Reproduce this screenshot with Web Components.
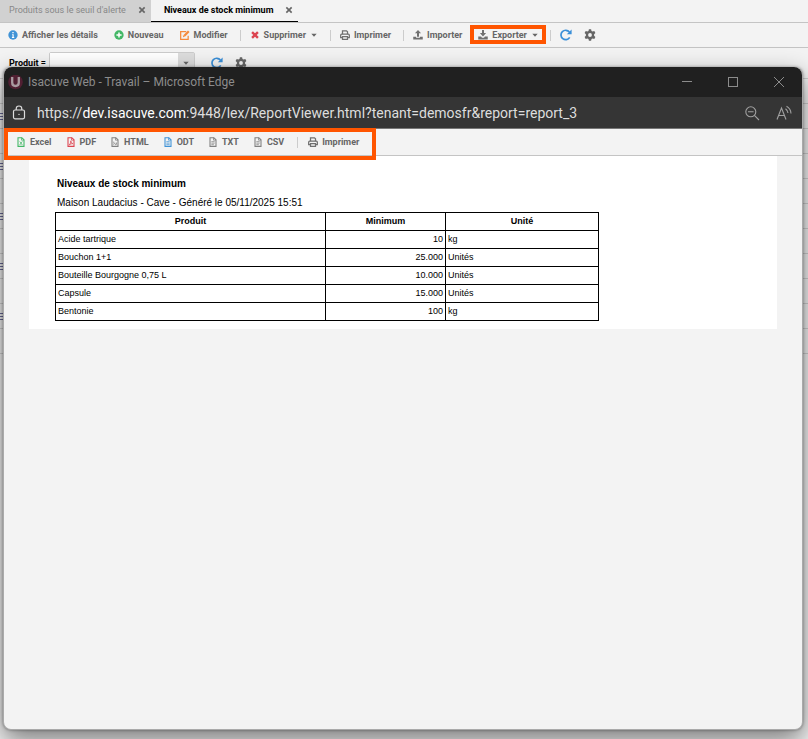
<!DOCTYPE html>
<html lang="fr">
<head>
<meta charset="utf-8">
<meta name="viewport" content="width=device-width, initial-scale=1">
<title>Niveaux de stock minimum</title>
<style>
    html, body {
        height: 100%;
    }

    body {
        margin: 0;
        overflow: hidden;
        background: #f3f3f3;
        color: #666;
        font: 500 9px/12px Roboto, sans-serif;
    }

    app-page {
        height: 100%;
    }
</style>
</head>
<body>

<app-page>
    <tab-strip slot="header">
        <tab-item label="Produits sous le seuil d'alerte"></tab-item>
        <tab-item label="Niveaux de stock minimum" active></tab-item>
    </tab-strip>
    <tool-bar slot="header">
        <tool-button icon="info">Afficher les détails</tool-button>
        <tool-button icon="plus">Nouveau</tool-button>
        <tool-button icon="edit">Modifier</tool-button>
        <tool-separator></tool-separator>
        <tool-button icon="cross" menu>Supprimer</tool-button>
        <tool-separator></tool-separator>
        <tool-button icon="print">Imprimer</tool-button>
        <tool-separator></tool-separator>
        <tool-button icon="upload">Importer</tool-button>
        <high-light>
            <tool-button icon="download" menu>Exporter</tool-button>
        </high-light>
        <tool-separator></tool-separator>
        <tool-button icon="refresh" title="Actualiser"></tool-button>
        <tool-button icon="gear" title="Options"></tool-button>
    </tool-bar>
    <filter-bar slot="header" label="Produit ="></filter-bar>
    <back-grid></back-grid>

    <popup-window slot="popup" caption="Isacuve Web - Travail – Microsoft Edge">
        <address-bar slot="address" scheme="https://" host="dev.isacuve.com" path=":9448/lex/ReportViewer.html?tenant=demosfr&amp;report=report_3"></address-bar>
        <tool-bar compact>
            <high-light large>
                <tool-button icon="excel">Excel</tool-button>
                <tool-button icon="pdf">PDF</tool-button>
                <tool-button icon="html">HTML</tool-button>
                <tool-button icon="odt">ODT</tool-button>
                <tool-button icon="txt">TXT</tool-button>
                <tool-button icon="txt">CSV</tool-button>
                <tool-separator></tool-separator>
                <tool-button icon="print">Imprimer</tool-button>
            </high-light>
        </tool-bar>
        <stock-report caption="Niveaux de stock minimum" info="Maison Laudacius - Cave - Généré le 05/11/2025 15:51"></stock-report>
    </popup-window>
</app-page>

<script>
const sheet = (color, inner) => `
    <g fill="none" stroke="${color}" stroke-width="1.3">
        <path d="M2.4 .8H7L9.6 3.4V11.2H2.4Z"/><path d="M6.6 .8V3.8H9.6" stroke-width=".9"/>
        <g stroke-width=".9">${inner}</g>
    </g>`;

const ICONS = {
    info: `<circle cx="6" cy="6" r="5.6" fill="#4093d6"/><path d="M5 5H6.8V8.5H7.5V9.5H4.7V8.5H5.4V6H4.8ZM5.2 2.3H6.8V3.9H5.2Z" fill="#fff"/>`,
    plus: `<circle cx="6" cy="6" r="5.6" fill="#43b766"/><path d="M6 2.9V9.1M2.9 6H9.1" stroke="#fff" stroke-width="1.8"/>`,
    edit: `<path d="M7.5 2H.8V11.2H9.8V7" fill="none" stroke="#f58a3c" stroke-width="1.5"/><path d="M3.5 8.7L4 6.3L9.6 .6L11.5 2.5L5.9 8.2Z" fill="#f58a3c"/><path d="M4.3 6.5L5.7 7.9" stroke="#fff" stroke-width=".7"/>`,
    cross: `<path d="M2.5 2.5L9.5 9.5M9.5 2.5L2.5 9.5" stroke="#dc4450" stroke-width="2.8"/>`,
    print: `<g fill="none" stroke="#707070" stroke-width="1.5"><path d="M3 5V.9H7.8L9 2.1V5"/><path d="M2.6 9H.8V6.3Q.8 5 2 5H10Q11.2 5 11.2 6.3V9H9.4"/><path d="M3 7.8H9V11.1H3Z"/></g>`,
    upload: `<path d="M6 0L9.7 4H7.2V8H4.8V4H2.3ZM.3 8H3.7V9.2H8.3V8H11.7V11.5H.3Z" fill="#707070"/>`,
    download: `<path d="M4.8 0H7.2V3.6H9.7L6 7.7L2.3 3.6H4.8ZM.3 7.8H3.7L4.8 9.2H7.2L8.3 7.8H11.7V11.5H.3Z" fill="#707070"/>`,
    refresh: `<path d="M9.7 8.4A4.7 4.7 0 1 1 9.4 3.1" fill="none" stroke="#3a8fd8" stroke-width="1.7"/><path d="M11.6 .4V5.2H6.8Z" fill="#3a8fd8"/>`,
    gear: `<path d="M4.9 .3H7.1L7.5 2L8.6 2.6L10.3 2.1L11.4 4L10.1 5.3V6.7L11.4 8L10.3 9.9L8.6 9.4L7.5 10L7.1 11.7H4.9L4.5 10L3.4 9.4L1.7 9.9L.6 8L1.9 6.7V5.3L.6 4L1.7 2.1L3.4 2.6L4.5 2ZM6 4.1A1.9 1.9 0 1 0 6 7.9A1.9 1.9 0 1 0 6 4.1Z" fill="#666" fill-rule="evenodd"/>`,
    excel: sheet('#43b766', '<path d="M4.4 5.3L7.6 9.6M7.6 5.3L4.4 9.6"/>'),
    pdf: sheet('#dc4450', '<path d="M3.9 9.5Q6 7.5 5.7 4.6Q6.2 7.5 8.3 8Q6 7.6 3.9 9.5"/>'),
    html: sheet('#808080', '<path d="M4.5 5.5V7.5M7.5 6.5V9M3.8 9L5.5 7.5L6.5 9.2L8.3 8"/>'),
    odt: sheet('#4093d6', '<path d="M4 5.6H8M4 7.4H8M4 9.2H8"/>'),
    txt: sheet('#808080', '<path d="M4 5.6H8M4 7.4H8M4 9.2H7"/>'),
    caret: `<path d="M2 4H10L6 8.5Z" fill="#666"/>`,
    close: `<path d="M2 2L10 10M10 2L2 10" stroke="#666" stroke-width="2.4"/>`
};

const icon = (name, size = 10) => `<svg width="${size}" height="${size}" viewBox="0 0 12 12" aria-hidden="true">${ICONS[name]}</svg>`;

const BUTTON_RESET = `
    button {
        margin: 0;
        padding: 0;
        border: 0;
        background: none;
        color: inherit;
        font: inherit;
        cursor: pointer;
    }
    svg {
        display: block;
        flex: none;
    }
`;

class BaseElement extends HTMLElement {
    constructor() {
        super();
        this.shadowDOM = this.attachShadow({mode: "open"});
    }

    connectedCallback() {
        this.render();
    }
}

class AppPage extends BaseElement {
    render() {
        this.shadowDOM.innerHTML = `
        <style>
        :host {
            display: flex;
            flex-direction: column;
            position: relative;
        }
        </style>
        <slot name="header"></slot>
        <slot></slot>
        <slot name="popup"></slot>
        `;
    }
}
customElements.define("app-page", AppPage);

class TabStrip extends BaseElement {
    render() {
        this.shadowDOM.innerHTML = `
        <style>
        :host {
            display: flex;
            height: 22px;
            border-bottom: 1px solid #c4c4c4;
        }
        </style>
        <slot></slot>
        `;
    }
}
customElements.define("tab-strip", TabStrip);

class TabItem extends BaseElement {
    render() {
        this.shadowDOM.innerHTML = `
        <style>
        ${BUTTON_RESET}
        :host {
            display: flex;
            align-items: center;
            gap: 12px;
            box-sizing: border-box;
            padding: 0 5px 2px 9px;
            background: #d1d1d1;
            color: #888;
            font-weight: 400;
        }
        :host([active]) {
            padding: 0 5px 1px 13px;
            border-bottom: 1px solid #000;
            background: #f3f3f3;
            color: #000;
            font-weight: 700;
        }
        </style>
        <button type="button">${this.getAttribute("label")}</button>
        <button type="button" aria-label="Fermer">${icon("close", 8)}</button>
        `;
    }
}
customElements.define("tab-item", TabItem);

class ToolBar extends BaseElement {
    render() {
        this.shadowDOM.innerHTML = `
        <style>
        :host {
            --button-padding: 8px;
            --separator-margin: 0 1px 0 4px;
            display: flex;
            align-items: center;
            height: 24px;
            border-bottom: 1px solid #c4c4c4;
        }
        :host([compact]) {
            --button-padding: 7px;
            --separator-margin: 0 3px 0 6px;
            height: 26px;
            padding-left: 5px;
        }
        </style>
        <slot></slot>
        `;
    }
}
customElements.define("tool-bar", ToolBar);

class ToolButton extends BaseElement {
    render() {
        const menu = this.hasAttribute("menu") ? icon("caret", 8) : "";
        const alone = this.textContent.trim() === "";
        this.shadowDOM.innerHTML = `
        <style>
        ${BUTTON_RESET}
        :host {
            display: block;
        }
        button {
            display: flex;
            align-items: center;
            gap: 4px;
            height: 24px;
            padding: 0 var(--button-padding, 8px);
            font-weight: 700;
            white-space: nowrap;
        }
        .alone {
            padding-right: 4px;
        }
        </style>
        <button type="button" class="${alone ? "alone" : ""}" aria-label="${this.title || this.textContent}">
            ${icon(this.getAttribute("icon"), alone ? 12 : 10)}
            ${alone ? "" : "<slot></slot>"}
            ${menu}
        </button>
        `;
    }
}
customElements.define("tool-button", ToolButton);

class ToolSeparator extends BaseElement {
    render() {
        this.shadowDOM.innerHTML = `
        <style>
        :host {
            display: block;
            width: 1px;
            height: 11px;
            margin: var(--separator-margin);
            background: #ccc;
        }
        </style>
        `;
    }
}
customElements.define("tool-separator", ToolSeparator);

// orange frame drawn over whatever it wraps
class HighLight extends BaseElement {
    render() {
        this.shadowDOM.innerHTML = `
        <style>
        :host {
            display: flex;
            align-items: center;
            position: relative;
            margin-right: -1px;
        }
        :host::after {
            content: "";
            position: absolute;
            inset: 2px 1px 3px 0;
            border: 4px solid #ff5500;
            pointer-events: none;
        }
        :host([large]) {
            margin-right: 0;
            padding-right: 10px;
        }
        :host([large])::after {
            inset: -2px 0 -6px -5px;
        }
        </style>
        <slot></slot>
        `;
    }
}
customElements.define("high-light", HighLight);

class FilterBar extends BaseElement {
    render() {
        this.shadowDOM.innerHTML = `
        <style>
        ${BUTTON_RESET}
        :host {
            display: flex;
            align-items: center;
            height: 30px;
            padding-left: 9px;
        }
        label {
            margin-right: 3px;
            color: #000;
            font-weight: 700;
        }
        .combo {
            display: flex;
            height: 22px;
            margin-right: 8px;
            border: 1px solid #ccc;
            border-radius: 2px;
            box-sizing: border-box;
        }
        input {
            width: 128px;
            padding: 0 4px;
            border: 0;
            box-sizing: border-box;
            background: #fff;
            font: inherit;
        }
        .combo button {
            padding: 0 4px;
            background: #ddd;
        }
        </style>
        <label for="product">${this.getAttribute("label")}</label>
        <div class="combo">
            <input id="product" type="text">
            <button type="button" aria-label="Ouvrir la liste">${icon("caret", 8)}</button>
        </div>
        <tool-button icon="refresh" title="Actualiser"></tool-button>
        <tool-button icon="gear" title="Options"></tool-button>
        `;
    }
}
customElements.define("filter-bar", FilterBar);

// list rows that stay visible on both sides of the popup
class BackGrid extends BaseElement {
    render() {
        this.shadowDOM.innerHTML = `
        <style>
        :host {
            display: block;
            border-bottom: 1px solid #d0d0d0;
        }
        .row {
            height: 24px;
            border-top: 1px solid #d0d0d0;
        }
        .row:nth-child(odd) {
            display: flex;
            align-items: center;
        }
        .row:nth-child(odd)::before {
            content: "";
            width: 3px;
            height: 7px;
            background: repeating-linear-gradient(#6a6a98 0 1px, transparent 1px 3px);
        }
        </style>
        ${'<div class="row"></div>'.repeat(11)}
        `;
    }
}
customElements.define("back-grid", BackGrid);

class PopupWindow extends BaseElement {
    render() {
        this.shadowDOM.innerHTML = `
        <style>
        ${BUTTON_RESET}
        :host {
            display: flex;
            flex-direction: column;
            position: absolute;
            inset: 67px 5px 9px 3px;
            border: 1px solid #aaa;
            border-top: 0;
            border-radius: 8px;
            background: #f3f3f3;
            box-sizing: border-box;
            box-shadow: 0 0 3px rgba(0, 0, 0, .4), 0 10px 26px rgba(0, 0, 0, .5);
        }
        header {
            display: flex;
            align-items: center;
            height: 30px;
            padding-left: 4px;
            border-radius: 8px 8px 0 0;
            background: #202020;
            color: #8c8c8c;
            font: 400 12px/16px Roboto, sans-serif;
        }
        h1 {
            flex: 1;
            margin: 0 0 0 5px;
            font: inherit;
        }
        header button {
            padding: 0 17px;
        }
        </style>
        <header>
            <svg width="15" height="15" viewBox="0 0 15 15" aria-hidden="true">
                <circle cx="7.5" cy="7" r="7.3" fill="#511f32"/>
                <path d="M4.2 2V7.5Q4.2 11 7.5 11Q10.8 11 10.8 7.5V2" fill="none" stroke="#a99aa0" stroke-width="2.3"/>
            </svg>
            <h1>${this.getAttribute("caption")}</h1>
            <button type="button" aria-label="Réduire"><svg width="12" height="12" viewBox="0 0 12 12"><path d="M1 5.5H11" stroke="#8c8c8c"/></svg></button>
            <button type="button" aria-label="Agrandir"><svg width="12" height="12" viewBox="0 0 12 12"><rect x="1.5" y="1.5" width="9" height="9" fill="none" stroke="#8c8c8c"/></svg></button>
            <button type="button" aria-label="Fermer"><svg width="12" height="12" viewBox="0 0 12 12"><path d="M1 1L11 11M11 1L1 11" stroke="#8c8c8c"/></svg></button>
        </header>
        <slot name="address"></slot>
        <slot></slot>
        `;
    }
}
customElements.define("popup-window", PopupWindow);

class AddressBar extends BaseElement {
    render() {
        this.shadowDOM.innerHTML = `
        <style>
        ${BUTTON_RESET}
        :host {
            display: flex;
            align-items: center;
            height: 31px;
            padding: 0 10px 0 8px;
            border-bottom: 1px solid #777;
            background: #353535;
            color: #ddd;
            font: 400 14px/20px Roboto, sans-serif;
        }
        p {
            flex: 1;
            margin: 0 0 0 11px;
        }
        b {
            color: #fff;
            font-weight: 400;
        }
        button + button {
            margin-left: 16px;
        }
        </style>
        <svg width="14" height="16" viewBox="0 0 14 16" fill="none" stroke="#ddd" stroke-width="1.2" aria-hidden="true">
            <rect x="1.5" y="5" width="11" height="8.8" rx="1.5"/>
            <path d="M4.2 5V3.8A2.8 2.8 0 0 1 9.8 3.8V5"/>
            <circle cx="7" cy="9.4" r=".7" fill="#ddd" stroke="none"/>
        </svg>
        <p>${this.getAttribute("scheme")}<b>${this.getAttribute("host")}</b>${this.getAttribute("path")}</p>
        <button type="button" aria-label="Zoom arrière">
            <svg width="16" height="16" viewBox="0 0 16 16" fill="none" stroke="#a0a0a0" stroke-width="1.1"><circle cx="6.8" cy="6.8" r="5"/><path d="M4 6.8H9.6M10.4 10.4L15 15"/></svg>
        </button>
        <button type="button" aria-label="Lecture à voix haute">
            <svg width="16" height="16" viewBox="0 0 16 16" fill="none" stroke="#a0a0a0" stroke-width="1.1"><path d="M1 14.5L5.5 3L10 14.5M2.6 10.5H8.4M9.5 3.7Q11.7 5.3 12 8M10.5 1.2Q14.8 3.5 15 8.5"/></svg>
        </button>
        `;
    }
}
customElements.define("address-bar", AddressBar);

class StockReport extends BaseElement {
    get rows() {
        return [
            ["Acide tartrique", "10", "kg"],
            ["Bouchon 1+1", "25.000", "Unités"],
            ["Bouteille Bourgogne 0,75 L", "10.000", "Unités"],
            ["Capsule", "15.000", "Unités"],
            ["Bentonie", "100", "kg"]
        ];
    }

    render() {
        this.shadowDOM.innerHTML = `
        <style>
        :host {
            display: block;
            margin: 0 25px;
            padding: 21px 26px 8px;
            background: #fff;
            color: #000;
            font: 400 10px/14px "Liberation Sans", Arial, sans-serif;
        }
        h2 {
            margin: 0 2px 5px;
            font-size: 10px;
            line-height: 14px;
        }
        p {
            margin: 0 2px 2px;
        }
        table {
            width: 544px;
            max-width: 100%;
            border-collapse: collapse;
            table-layout: fixed;
            font-size: 9px;
            line-height: 11px;
        }
        th, td {
            height: 17px;
            padding: 0 2px;
            border: 1px solid #000;
            text-align: left;
        }
        th {
            text-align: center;
        }
        td:nth-child(2) {
            text-align: right;
        }
        .minimum {
            width: 120px;
        }
        .unit {
            width: 153px;
        }
        </style>
        <h2>${this.getAttribute("caption")}</h2>
        <p>${this.getAttribute("info")}</p>
        <table>
            <colgroup><col><col class="minimum"><col class="unit"></colgroup>
            <thead>
                <tr><th>Produit</th><th>Minimum</th><th>Unité</th></tr>
            </thead>
            <tbody>
                ${this.rows.map(row => `<tr>${row.map(cell => `<td>${cell}</td>`).join("")}</tr>`).join("")}
            </tbody>
        </table>
        `;
    }
}
customElements.define("stock-report", StockReport);
</script>
</body>
</html>
